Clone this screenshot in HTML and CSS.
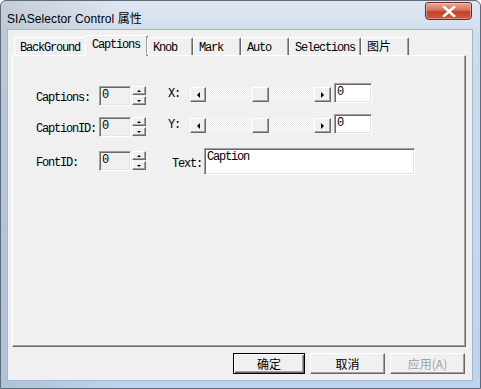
FILE: index.html
```html
<!DOCTYPE html>
<html lang="zh">
<head>
    <meta charset="UTF-8">
    <meta name="viewport" content="width=device-width, initial-scale=1.0">
    <title>SIASelector Control 属性</title>
    <link rel="stylesheet" href="styles.css">
</head>
<body>
    <div class="window">
        <div class="titlebar">
            <span class="title">SIASelector Control 属性</span>
            <button class="close" type="button">
                <svg width="14" height="11" viewBox="0 0 14 11">
                    <path d="M2 1 L12 10 M12 1 L2 10" stroke="#fff" stroke-width="2.6" stroke-linecap="square"/>
                </svg>
            </button>
        </div>

        <div class="client">
            <div class="tabctl">
                <div class="tabstrip">
                    <div class="tab w1">BackGround</div>
                    <div class="tab w2 active">Captions</div>
                    <div class="tab w3">Knob</div>
                    <div class="tab w4">Mark</div>
                    <div class="tab w4">Auto</div>
                    <div class="tab w6">Selections</div>
                    <div class="tab w4 cjk">图片</div>
                </div>

                <div class="panel">
                    <div class="row row1">
                        <label class="lbl">Captions:</label>
                        <div class="edit spinedit">0</div>
                        <div class="spin"><span class="up"></span><span class="down"></span></div>
                        <label class="lbl xy">X:</label>
                        <div class="scroll">
                            <span class="arrow left"></span>
                            <span class="track"><span class="thumb"></span></span>
                            <span class="arrow right"></span>
                        </div>
                        <div class="edit white small">0</div>
                    </div>

                    <div class="row row2">
                        <label class="lbl">CaptionID:</label>
                        <div class="edit spinedit">0</div>
                        <div class="spin"><span class="up"></span><span class="down"></span></div>
                        <label class="lbl xy">Y:</label>
                        <div class="scroll">
                            <span class="arrow left"></span>
                            <span class="track"><span class="thumb"></span></span>
                            <span class="arrow right"></span>
                        </div>
                        <div class="edit white small">0</div>
                    </div>

                    <div class="row row3">
                        <label class="lbl">FontID:</label>
                        <div class="edit spinedit">0</div>
                        <div class="spin"><span class="up"></span><span class="down"></span></div>
                        <label class="lbl txt">Text:</label>
                        <div class="edit white wide">Caption</div>
                    </div>
                </div>
            </div>

            <div class="buttons">
                <button type="button" class="btn default">确定</button>
                <button type="button" class="btn">取消</button>
                <button type="button" class="btn disabled">应用(A)</button>
            </div>
        </div>
    </div>
</body>
</html>
```

FILE: styles.css
```css
* {
    box-sizing: border-box;
}

body {
    margin: 0;
    width: 481px;
    height: 389px;
    overflow: hidden;
    background: #ffffff;
}

.window {
    width: 481px;
    height: 389px;
    border: 1px solid #5e6b7a;
    border-radius: 6px 6px 0 0;
    padding: 0 7px 7px 6px;
    display: flex;
    flex-direction: column;
    background:
        linear-gradient(to right, rgba(150, 160, 170, 0.35), rgba(255, 255, 255, 0) 120px),
        linear-gradient(to bottom, #dfe7f1 0, #cddcee 40px, #bcd4ef 100%);
}

.titlebar {
    height: 28px;
    display: flex;
    justify-content: space-between;
    align-items: flex-start;
}

.title {
    font-family: "Liberation Sans", "Noto Sans CJK SC", sans-serif;
    font-size: 12px;
    color: #000;
    margin-top: 8px;
    letter-spacing: 0.1px;
}

.close {
    width: 47px;
    height: 18px;
    margin: 1px 1px 0 0;
    padding: 0;
    border: 1px solid #6b2a1e;
    border-radius: 3px 3px 4px 4px;
    background: linear-gradient(to bottom, #e9a99a 0, #d7705c 45%, #c2402a 55%, #cf5a3d 100%);
    display: flex;
    align-items: center;
    justify-content: center;
    box-shadow: inset 0 0 0 1px rgba(255, 255, 255, 0.35);
}

.client {
    flex: 1;
    background: #f0f0f0;
    border: 1px solid #a3b6cc;
    padding: 5px 6px 0 4px;
    display: flex;
    flex-direction: column;
}

/* tab control */
.tabctl {
    height: 312px;
    display: flex;
    flex-direction: column;
}

.tabstrip {
    height: 20px;
    display: flex;
    padding-left: 2px;
    position: relative;
    z-index: 1;
}

.tab {
    height: 18px;
    margin-top: 2px;
    padding: 3px 0 0 5px;
    font-family: "Liberation Mono", monospace;
    font-size: 12px;
    letter-spacing: -1.2px;
    line-height: 14px;
    color: #000;
    background: #f0f0f0;
    border-top: 1px solid #ffffff;
    border-left: 1px solid #ffffff;
    border-right: 1px solid #696969;
    box-shadow: inset -1px 0 #a0a0a0;
    border-radius: 2px 2px 0 0;
}

.tab.cjk {
    font-family: "Noto Sans CJK SC", sans-serif;
    letter-spacing: 0;
    padding-top: 1px;
}

.tab.active {
    height: 21px;
    margin-top: 0;
    margin-left: -2px;
    margin-right: -1px;
    padding-top: 2px;
    padding-left: 6px;
}

.w1 { width: 73px; }
.w2 { width: 63px; }
.w3 { width: 46px; }
.w4 { width: 48px; }
.w6 { width: 72px; }

.panel {
    flex: 1;
    border-top: 1px solid #ffffff;
    border-left: 1px solid #ffffff;
    border-right: 1px solid #696969;
    border-bottom: 1px solid #696969;
    box-shadow: inset -1px -1px #a0a0a0;
    padding: 27px 0 0 23px;
}

.row {
    display: flex;
    align-items: flex-start;
}

.row2 {
    margin-top: 6px;
}

.row3 {
    margin-top: 9px;
}

.lbl {
    font-family: "Liberation Mono", monospace;
    font-size: 12px;
    letter-spacing: -1.2px;
    line-height: 20px;
    color: #000;
    width: 63px;
    margin-top: 5px;
}

.lbl.xy {
    width: 22px;
    margin-left: 22px;
    margin-top: 1px;
}

.lbl.txt {
    width: 31px;
    margin-left: 26px;
    margin-top: 6px;
}

.edit {
    height: 20px;
    font-family: "Liberation Mono", monospace;
    font-size: 12px;
    letter-spacing: -1.2px;
    line-height: 16px;
    padding-left: 2px;
    color: #000;
    border-top: 1px solid #a0a0a0;
    border-left: 1px solid #a0a0a0;
    border-right: 1px solid #ffffff;
    border-bottom: 1px solid #ffffff;
    box-shadow: inset 1px 1px #696969, inset -1px -1px #e3e3e3;
}

.spinedit {
    width: 32px;
    margin-top: 3px;
    background: #f0f0f0;
}

.white {
    background: #ffffff;
}

.small {
    width: 38px;
    margin-left: 3px;
}

.wide {
    width: 211px;
    height: 27px;
    margin-left: 1px;
}

.spin {
    width: 14px;
    margin: 3px 0 0 1px;
    display: flex;
    flex-direction: column;
    gap: 1px;
}

.spin span,
.arrow,
.thumb {
    display: flex;
    align-items: center;
    justify-content: center;
    background: #f0f0f0;
    border-top: 1px solid #ffffff;
    border-left: 1px solid #ffffff;
    border-right: 1px solid #696969;
    border-bottom: 1px solid #696969;
    box-shadow: inset -1px -1px #a0a0a0;
}

.spin span {
    height: 9px;
}

.up::after,
.down::after,
.arrow::after {
    content: "";
    width: 0;
    height: 0;
    border: 2px solid transparent;
}

.up::after {
    border-bottom: 2px solid #000;
    border-top-width: 0;
}

.down::after {
    border-top: 2px solid #000;
    border-bottom-width: 0;
}

.scroll {
    display: flex;
    height: 15px;
    width: 141px;
    margin-top: 4px;
}

.arrow {
    width: 16px;
    height: 15px;
}

.arrow.right {
    width: 17px;
}

.left::after {
    border-right: 3px solid #000;
    border-left-width: 0;
    border-top-width: 3px;
    border-bottom-width: 3px;
}

.right::after {
    border-left: 3px solid #000;
    border-right-width: 0;
    border-top-width: 3px;
    border-bottom-width: 3px;
}

.track {
    flex: 1;
    display: flex;
    justify-content: center;
    background: repeating-conic-gradient(#fbfbfb 0 25%, #ebebeb 0 50%) 0 0 / 2px 2px;
}

.thumb {
    width: 17px;
    height: 15px;
}

/* dialog buttons */
.buttons {
    display: flex;
    justify-content: flex-end;
    gap: 5px;
    margin-top: 6px;
    padding-right: 1px;
}

.btn {
    width: 75px;
    height: 21px;
    padding: 0;
    font-family: "Noto Sans CJK SC", sans-serif;
    font-size: 12px;
    color: #000;
    background: #f0f0f0;
    border-top: 1px solid #ffffff;
    border-left: 1px solid #ffffff;
    border-right: 1px solid #696969;
    border-bottom: 1px solid #696969;
    box-shadow: inset -1px -1px #a0a0a0;
}

.btn.default {
    width: 72px;
    border: 1px solid #000;
    box-shadow: inset 1px 1px #ffffff, inset -1px -1px #696969, inset -2px -2px #a0a0a0;
}

.btn.disabled {
    color: #a0a0a0;
}
```
